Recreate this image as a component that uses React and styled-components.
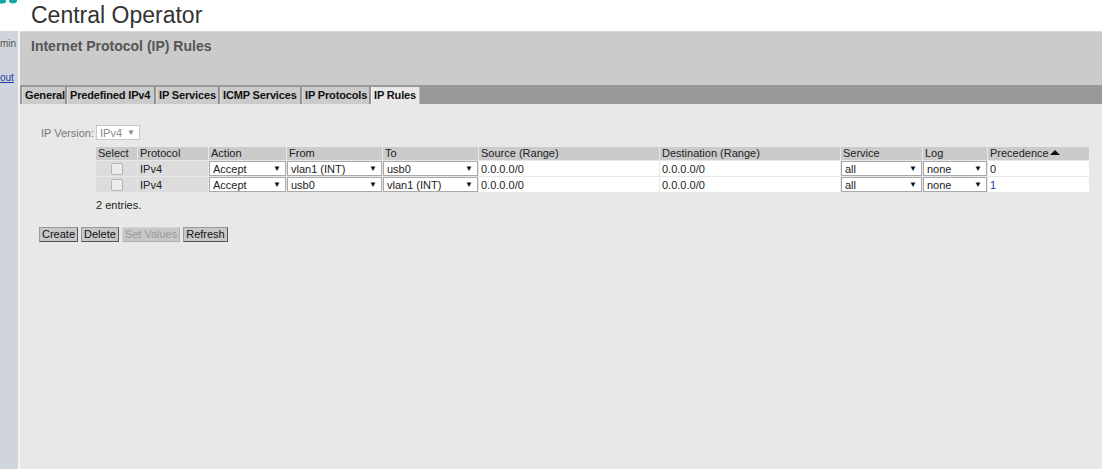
import React from "react";
import styled, { createGlobalStyle } from "styled-components";

const Global = createGlobalStyle`
  html, body { margin: 0; padding: 0; background: #fff; }
  body { font-family: "Liberation Sans", Arial, sans-serif; font-size: 11px; color: #333; }
`;

const Page = styled.div`
  display: flex;
  flex-direction: column;
  height: 469px;
  overflow: hidden;
`;

const Header = styled.div`
  position: relative;
  height: 31px;
  flex: none;
  background: #fff;
  display: flex;
  align-items: flex-start;
`;

const Logo = styled.svg`
  position: absolute;
  left: 0;
  top: 0;
`;

const AppTitle = styled.div`
  margin-left: 31px;
  margin-top: 2px;
  font-size: 23px;
  line-height: 26px;
  color: #333;
`;

const Body = styled.div`
  flex: 1;
  display: flex;
  min-height: 0;
`;

const Sidebar = styled.div`
  width: 18px;
  flex: none;
  background: #d0d4dd;
  border-right: 2px solid #f4f4f6;
  display: flex;
  flex-direction: column;
  align-items: flex-start;
  padding-top: 7px;
`;

const SideText = styled.span`
  white-space: nowrap;
  font-size: 10px;
  color: ${(p) => (p.$link ? "#1a3ea8" : "#555")};
  text-decoration: ${(p) => (p.$link ? "underline" : "none")};
  margin-top: ${(p) => p.$mt || 0}px;
  line-height: 12px;
`;

const Main = styled.div`
  flex: 1;
  display: flex;
  flex-direction: column;
  background: #e8e8e8;
  min-width: 0;
`;

const TitleBar = styled.div`
  height: 54px;
  background: #cbcbcb;
  border-top: 1px solid #d8d8d8;
  box-sizing: border-box;
  padding: 6px 0 0 11px;
`;

const PageTitle = styled.h1`
  margin: 0;
  font-size: 14px;
  font-weight: bold;
  color: #555;
  line-height: 17px;
`;

const TabBar = styled.div`
  height: 19px;
  background: #999;
  display: flex;
  align-items: flex-end;
  padding-left: 2px;
  gap: 1px;
`;

const Tab = styled.div`
  height: 17px;
  width: ${(p) => p.$w}px;
  box-sizing: border-box;
  padding: 2px 0 0 2px;
  font-weight: bold;
  font-size: 11px;
  line-height: 13px;
  letter-spacing: -0.15px;
  color: #111;
  background: ${(p) => (p.$active ? "#e8e8e8" : "#cbcbcb")};
  border-left: 1px solid ${(p) => (p.$active ? "#f2f2f2" : "#dcdcdc")};
  border-right: 1px solid ${(p) => (p.$active ? "#bdbdbd" : "#8d8d8d")};
  white-space: nowrap;
  overflow: hidden;
`;

const Content = styled.div`
  flex: 1;
  padding: 21px 0 0 19px;
`;

const VersionRow = styled.div`
  display: flex;
  align-items: center;
  gap: 2px;
  height: 15px;
  margin-left: 2px;
`;

const Label = styled.span`
  color: #777;
  font-size: 11px;
`;

const Select = styled.div`
  box-sizing: border-box;
  height: 15px;
  width: ${(p) => p.$w}px;
  background: #fff;
  border: 1px solid ${(p) => (p.$disabled ? "#c8c8c8" : "#a9a9a9")};
  color: ${(p) => (p.$disabled ? "#888" : "#222")};
  display: flex;
  align-items: center;
  justify-content: space-between;
  padding: 0 4px 0 3px;
  font-size: 11px;
  white-space: nowrap;
`;

const Arrow = styled.span`
  font-size: 8px;
  color: ${(p) => (p.$disabled ? "#888" : "#111")};
`;

const Table = styled.table`
  margin: 6px 0 0 56px;
  border-collapse: separate;
  border-spacing: 1px;
  width: 995px;
  font-size: 11px;
`;

const Th = styled.th`
  background: #cbcbcb;
  font-weight: normal;
  text-align: left;
  padding: 0 2px;
  height: 13px;
  line-height: 13px;
  color: #222;
  width: ${(p) => p.$w}px;
  white-space: nowrap;
`;

const Td = styled.td`
  background: ${(p) => (p.$gray ? "#dcdcdc" : "#fff")};
  padding: ${(p) => (p.$tight ? "0" : "0 2px")};
  height: 15px;
  text-align: ${(p) => (p.$center ? "center" : "left")};
  color: ${(p) => p.$color || "#222"};
  white-space: nowrap;
  vertical-align: middle;
`;

const Check = styled.span`
  display: inline-block;
  width: 10px;
  height: 10px;
  border: 1px solid #b4b4b4;
  border-radius: 2px;
  background: #ececec;
  vertical-align: middle;
`;

const SortUp = styled.span`
  display: inline-block;
  width: 0;
  height: 0;
  border-left: 5px solid transparent;
  border-right: 5px solid transparent;
  border-bottom: 5px solid #111;
  margin-left: 1px;
  vertical-align: 2px;
`;

const Entries = styled.div`
  margin: 6px 0 0 57px;
  color: #222;
  line-height: 13px;
`;

const ButtonRow = styled.div`
  display: flex;
  gap: 3px;
  margin: 15px 0 0 0;
`;

const Button = styled.button`
  font-family: "Liberation Sans", Arial, sans-serif;
  font-size: 11px;
  height: 15px;
  padding: 0 2px;
  line-height: 11px;
  background: #c8c8c8;
  color: ${(p) => (p.disabled ? "#999" : "#111")};
  border: 1px solid;
  border-radius: 0;
  border-color: ${(p) => (p.disabled ? "#d6d6d6 #b0b0b0 #b0b0b0 #d6d6d6" : "#999 #555 #555 #999")};
`;

const tabs = [
  ["General", 44],
  ["Predefined IPv4", 88],
  ["IP Services", 63],
  ["ICMP Services", 81],
  ["IP Protocols", 68],
  ["IP Rules", 49],
];

const rows = [
  { action: "Accept", from: "vlan1 (INT)", to: "usb0", prec: "0", precColor: "#222" },
  { action: "Accept", from: "usb0", to: "vlan1 (INT)", prec: "1", precColor: "#1a3ea8" },
];

function Sel({ w, value }) {
  return (
    <Select $w={w}>
      <span>{value}</span>
      <Arrow>▼</Arrow>
    </Select>
  );
}

export default function App() {
  return (
    <Page>
      <Global />
      <Header>
        <Logo width="20" height="5" viewBox="0 0 20 5">
          <path d="M0 0 H6 V2 Q5 3.5 3 3.5 H0 Z" fill="#14a7a0" />
          <path d="M9 0 H17 V1.6 Q16 3.6 13 3.6 Q10 3.6 9 1.6 Z" fill="#14a7a0" />
        </Logo>
        <AppTitle>Central Operator</AppTitle>
      </Header>
      <Body>
        <Sidebar>
          <SideText>min</SideText>
          <SideText $link $mt={22}>out</SideText>
        </Sidebar>
        <Main>
          <TitleBar>
            <PageTitle>Internet Protocol (IP) Rules</PageTitle>
          </TitleBar>
          <TabBar>
            {tabs.map(([t, w]) => (
              <Tab key={t} $w={w} $active={t === "IP Rules"}>{t}</Tab>
            ))}
          </TabBar>
          <Content>
            <VersionRow>
              <Label>IP Version:</Label>
              <Select $w={44} $disabled>
                <span>IPv4</span>
                <Arrow $disabled>▼</Arrow>
              </Select>
            </VersionRow>
            <Table>
              <thead>
                <tr>
                  <Th $w={37}>Select</Th>
                  <Th $w={66}>Protocol</Th>
                  <Th $w={73}>Action</Th>
                  <Th $w={91}>From</Th>
                  <Th $w={91}>To</Th>
                  <Th $w={176}>Source (Range)</Th>
                  <Th $w={176}>Destination (Range)</Th>
                  <Th $w={77}>Service</Th>
                  <Th $w={60}>Log</Th>
                  <Th>Precedence<SortUp /></Th>
                </tr>
              </thead>
              <tbody>
                {rows.map((r, i) => (
                  <tr key={i}>
                    <Td $gray $center><Check /></Td>
                    <Td $gray>IPv4</Td>
                    <Td $tight><Sel w={77} value={r.action} /></Td>
                    <Td $tight><Sel w={95} value={r.from} /></Td>
                    <Td $tight><Sel w={95} value={r.to} /></Td>
                    <Td>0.0.0.0/0</Td>
                    <Td>0.0.0.0/0</Td>
                    <Td $tight><Sel w={81} value="all" /></Td>
                    <Td $tight><Sel w={64} value="none" /></Td>
                    <Td $color={r.precColor}>{r.prec}</Td>
                  </tr>
                ))}
              </tbody>
            </Table>
            <Entries>2 entries.</Entries>
            <ButtonRow>
              <Button>Create</Button>
              <Button>Delete</Button>
              <Button disabled>Set Values</Button>
              <Button>Refresh</Button>
            </ButtonRow>
          </Content>
        </Main>
      </Body>
    </Page>
  );
}
